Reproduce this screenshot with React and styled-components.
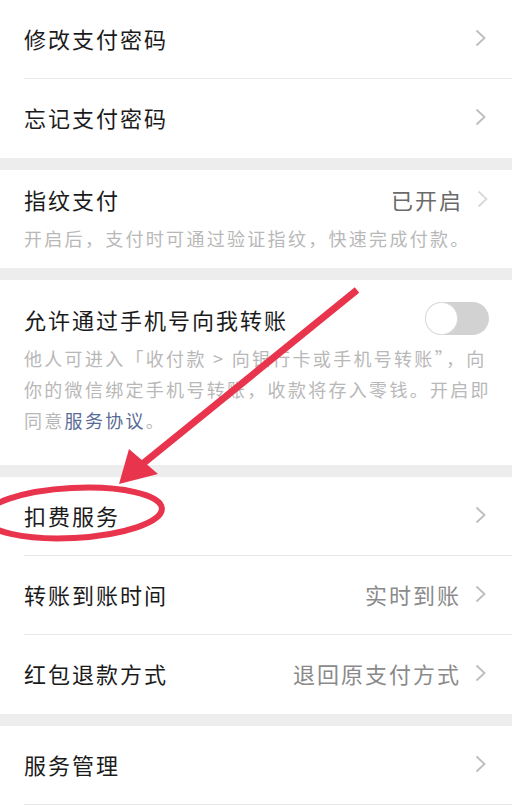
import React from "react";
import styled, { createGlobalStyle } from "styled-components";

const GlobalStyle = createGlobalStyle`
  html, body {
    margin: 0;
    padding: 0;
    background: #ededed;
  }
  body {
    font-family: "Noto Sans CJK SC", "Noto Sans", sans-serif;
    -webkit-font-smoothing: antialiased;
  }
`;

const Page = styled.div`
  position: relative;
  width: 512px;
  height: 811px;
  overflow: hidden;
  background: #ededed;
`;

const Group = styled.div`
  background: #fff;
  margin-bottom: 12px;
`;

const Row = styled.div`
  display: flex;
  align-items: center;
  height: 79px;
  padding: 0 25px 4px 24px;
  position: relative;
  box-sizing: border-box;

  & + &::before {
    content: "";
    position: absolute;
    top: -1px;
    left: 24px;
    right: 0;
    height: 1px;
    background: #e8e8e8;
  }
`;

const Title = styled.span`
  flex: 1;
  font-size: 22px;
  letter-spacing: 2px;
  color: #1b1b1b;
  line-height: 32px;
  white-space: nowrap;
`;

const Value = styled.span`
  font-size: 22px;
  letter-spacing: 2px;
  color: ${(p) => (p.$dark ? "#6a6a6a" : "#8a8a8a")};
  margin-right: 14px;
  white-space: nowrap;
`;

const Block = styled.div`
  padding: ${(p) => p.$pad};
  position: relative;
`;

const BlockHead = styled.div`
  display: flex;
  align-items: center;
  padding-right: 23px;
`;

const Note = styled.div`
  margin-top: 8px;
  font-size: 18px;
  letter-spacing: 2.3px;
  line-height: 31px;
  color: #b8b8b8;
  white-space: nowrap;
`;

const Link = styled.span`
  color: #576b95;
`;

const Track = styled.div`
  width: 64px;
  height: 33px;
  border-radius: 17px;
  background: #d2d2d2;
  display: flex;
  align-items: center;
  padding: 1px;
  box-sizing: border-box;
`;

const Knob = styled.div`
  width: 31px;
  height: 31px;
  border-radius: 50%;
  background: #fff;
  box-shadow: 0 0 0 1px #dcdcdc;
`;

const Overlay = styled.svg`
  position: absolute;
  top: 0;
  left: 0;
  pointer-events: none;
`;

function Chevron({ light }) {
  return (
    <svg width="12" height="18" viewBox="0 0 12 18">
      <path
        d="M1.5 1.5 L9.5 9 L1.5 16.5"
        fill="none"
        stroke={light ? "#d8d8d8" : "#bdbdbd"}
        strokeWidth="1.8"
      />
    </svg>
  );
}

function Item({ title, value, dark }) {
  return (
    <Row>
      <Title>{title}</Title>
      {value && <Value $dark={dark}>{value}</Value>}
      <Chevron />
    </Row>
  );
}

export default function App() {
  return (
    <>
      <GlobalStyle />
      <Page>
        <Group>
          <Item title="修改支付密码" />
          <Item title="忘记支付密码" />
        </Group>

        <Group>
          <Block $pad="13px 0 14px 24px">
            <BlockHead>
              <Title>指纹支付</Title>
              <Value $dark>已开启</Value>
              <Chevron light />
            </BlockHead>
            <Note>开启后，支付时可通过验证指纹，快速完成付款。</Note>
          </Block>
        </Group>

        <Group>
          <Block $pad="22px 0 29px 24px">
            <BlockHead>
              <Title>允许通过手机号向我转账</Title>
              <Track>
                <Knob />
              </Track>
            </BlockHead>
            <Note>
              他人可进入「收付款 &gt; 向银行卡或手机号转账”，向
              <br />
              你的微信绑定手机号转账，收款将存入零钱。开启即
              <br />
              同意<Link>服务协议</Link>。
            </Note>
          </Block>
        </Group>

        <Group>
          <Item title="扣费服务" />
          <Item title="转账到账时间" value="实时到账" />
          <Item title="红包退款方式" value="退回原支付方式" />
        </Group>

        <Group>
          <Item title="服务管理" />
          <Row />
        </Group>

        <Overlay width="512" height="811" viewBox="0 0 512 811">
          <line
            x1="357"
            y1="290"
            x2="140"
            y2="466"
            stroke="#e8344c"
            strokeWidth="7"
          />
          <polygon points="119,484 129,449 158,474" fill="#e8344c" />
          <ellipse
            cx="73"
            cy="513"
            rx="89"
            ry="25"
            fill="none"
            stroke="#e8344c"
            strokeWidth="6"
            transform="rotate(-3 73 513)"
          />
        </Overlay>
      </Page>
    </>
  );
}
